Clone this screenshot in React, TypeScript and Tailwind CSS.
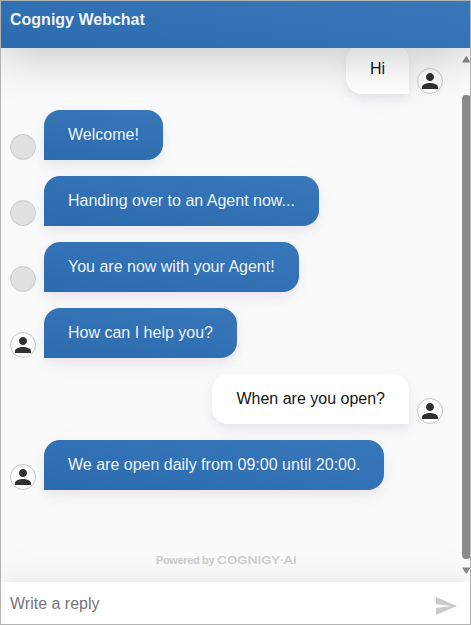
type Sender = "bot" | "agent" | "user";

interface Message {
  id: number;
  from: Sender;
  text: string;
}

const messages: Message[] = [
  { id: 1, from: "user", text: "Hi" },
  { id: 2, from: "bot", text: "Welcome!" },
  { id: 3, from: "bot", text: "Handing over to an Agent now..." },
  { id: 4, from: "bot", text: "You are now with your Agent!" },
  { id: 5, from: "agent", text: "How can I help you?" },
  { id: 6, from: "user", text: "When are you open?" },
  { id: 7, from: "agent", text: "We are open daily from 09:00 until 20:00." },
];

function Avatar({ from }: { from: Sender }) {
  if (from === "bot") {
    return <div className="size-[26px] shrink-0 rounded-full border border-[#cbcbcb] bg-[#e1e1e1]" />;
  }
  return (
    <div className="flex size-[26px] shrink-0 items-center justify-center rounded-full border border-[#c8c8c8] bg-[#fbfbfb]">
      <svg viewBox="0 0 24 24" className="size-6" fill="#303030">
        <path d="M12 12c2.21 0 4-1.79 4-4s-1.79-4-4-4-4 1.79-4 4 1.79 4 4 4zm0 2c-2.67 0-8 1.34-8 4v2h16v-2c0-2.66-5.33-4-8-4z" />
      </svg>
    </div>
  );
}

function MessageRow({ message }: { message: Message }) {
  const isUser = message.from === "user";
  return (
    <div className={`flex items-end gap-2 ${isUser ? "flex-row-reverse" : ""}`}>
      <Avatar from={message.from} />
      <div
        className={`h-[50px] whitespace-nowrap rounded-t-[16px] px-6 text-base leading-[49px] shadow-[0_5px_9px_0_rgba(151,124,156,0.1),0_5px_16px_0_rgba(203,195,212,0.1),0_8px_20px_0_rgba(216,212,221,0.1)] ${
          isUser
            ? "rounded-bl-[16px] bg-white text-black/95"
            : "rounded-br-[16px] bg-linear-[8deg,#2d6baf,#3777ba] text-white/95"
        }`}
      >
        {message.text}
      </div>
    </div>
  );
}

function Scrollbar() {
  return (
    <div className="flex w-[9px] shrink-0 flex-col overflow-hidden bg-[#fbfbfb]">
      <svg viewBox="0 0 9 47" className="h-[47px] w-[9px] shrink-0" fill="#858585">
        <path d="M1 14.5 4.8 8.5h1L9.5 14.5z" />
      </svg>
      <div className="ml-px h-[464px] w-[9px] shrink-0 rounded-[4px] bg-[#8b8b8b]" />
      <svg viewBox="0 0 9 23" className="h-[23px] w-[9px] shrink-0" fill="#858585">
        <path d="M1 8.5h8.5L5.8 14.5h-1z" />
      </svg>
    </div>
  );
}

export default function App() {
  return (
    <div className="flex h-[625px] w-[471px] flex-col overflow-hidden border border-[#b2b2b2] bg-white font-['Liberation_Sans',Arial,sans-serif]">
      <header className="relative z-10 h-[47px] shrink-0 bg-linear-[8deg,#2d6baf,#3777ba] px-[9px] text-base font-bold leading-[37px] text-white/95 shadow-[0_4px_50px_0_rgba(0,0,0,0.25)]">
        Cognigy Webchat
      </header>
      <main className="flex h-[534px] shrink-0 overflow-hidden bg-[#fafafa]">
        <div className="flex min-w-0 flex-1 flex-col pl-[9px] pr-[18px]">
          <div className="-mt-1 flex flex-col gap-4">
            {messages.map((message) => (
              <MessageRow key={message.id} message={message} />
            ))}
          </div>
          <div className="mt-[62px] flex h-4 items-center pl-[146px] text-[11px] font-bold leading-4 text-[#cbcbcb]">
            <span className="w-[61px] shrink-0 whitespace-nowrap tracking-[-0.35px]">Powered by</span>
            <span className="origin-left scale-x-[1.23] whitespace-nowrap font-['Inter',sans-serif] text-[11px] font-medium text-[#c8c8c8]">
              COGNIGY·AI
            </span>
          </div>
        </div>
        <Scrollbar />
      </main>
      <footer className="relative z-10 flex min-h-0 flex-1 items-center justify-between bg-white pl-[9px] pr-3 shadow-[0_-5px_18px_0_rgba(151,124,156,0.1),0_-5px_32px_0_rgba(203,195,212,0.1)]">
        <input
          aria-label="Message"
          placeholder="Write a reply"
          className="mt-px min-w-0 flex-1 bg-transparent text-base text-[#555] outline-none placeholder:text-[#767676]"
        />
        <button aria-label="Send" className="mt-[5px] flex size-6 items-center justify-center">
          <svg viewBox="0 0 21 18" className="h-[18px] w-[21px]" fill="#cacaca">
            <path d="M0 18 21 9 0 0v7l15 2-15 2z" />
          </svg>
        </button>
      </footer>
    </div>
  );
}
